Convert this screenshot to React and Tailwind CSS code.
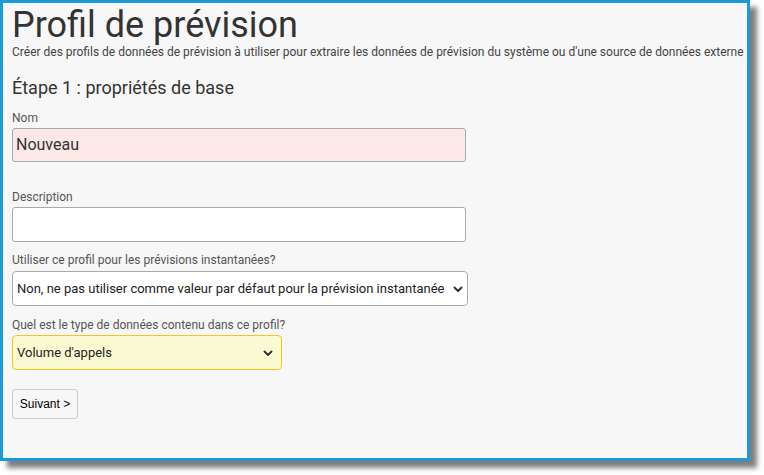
const labelCls = "block text-[12px] leading-[14px] text-[#555]";

function Chevron() {
  return (
    <svg width="10" height="10" viewBox="0 0 10 10" className="shrink-0">
      <path d="M1.5 3.5 L5 7 L8.5 3.5" fill="none" stroke="#333" strokeWidth="2" strokeLinecap="round" strokeLinejoin="round" />
    </svg>
  );
}

function FakeSelect({ value, className }) {
  return (
    <div className={`flex items-center justify-between gap-[2px] rounded-[4px] border pl-[4px] pr-[4px] text-[13px] text-[#222] ${className}`}>
      <span className="whitespace-nowrap">{value}</span>
      <Chevron />
    </div>
  );
}

export default function App() {
  return (
    <div className="w-[764px] h-[475px] bg-white" style={{ fontFamily: "Roboto, 'Liberation Sans', sans-serif" }}>
      <div className="w-[750px] h-[461px] border-[3px] border-[#1b9ad6] bg-[#f7f7f7] shadow-[7px_7px_5px_rgba(0,0,0,0.5)] pl-[9px] pt-[1px]">
        <h1 className="text-[36px] leading-[42px] text-[#333] font-normal">Profil de prévision</h1>
        <p className="text-[12px] leading-[14px] text-[#444] -mt-[1px] whitespace-nowrap">
          Créer des profils de données de prévision à utiliser pour extraire les données de prévision du système ou d'une source de données externe
        </p>
        <h2 className="mt-[17px] text-[18px] leading-[24px] text-[#333]">Étape 1 : propriétés de base</h2>

        <label className={`${labelCls} mt-[11px]`}>Nom</label>
        <div className="mt-[3px] w-[454px] h-[34px] rounded-[3px] border border-[#aaa] bg-[#fce8e6] flex items-center pl-[3px] text-[16px] text-[#333]">
          Nouveau
        </div>

        <label className={`${labelCls} mt-[28px]`}>Description</label>
        <div className="mt-[3px] w-[454px] h-[35px] rounded-[3px] border border-[#aaa] bg-white" />

        <label className={`${labelCls} mt-[11px]`}>Utiliser ce profil pour les prévisions instantanées?</label>
        <FakeSelect
          value="Non, ne pas utiliser comme valeur par défaut pour la prévision instantanée"
          className="mt-[4px] w-[456px] h-[35px] border-[#aaa] bg-white"
        />

        <label className={`${labelCls} mt-[12px]`}>Quel est le type de données contenu dans ce profil?</label>
        <FakeSelect value="Volume d'appels" className="mt-[3px] w-[270px] h-[35px] border-[#f3c623] bg-[#fafad2] pr-[8px]" />

        <button
          className="mt-[19px] w-[66px] h-[30px] rounded-[3px] border border-[#ccc] bg-[#f7f7f7] text-[12px] text-black"
          style={{ fontFamily: "'Liberation Sans', Arial, sans-serif" }}
        >
          Suivant &gt;
        </button>
      </div>
    </div>
  );
}
